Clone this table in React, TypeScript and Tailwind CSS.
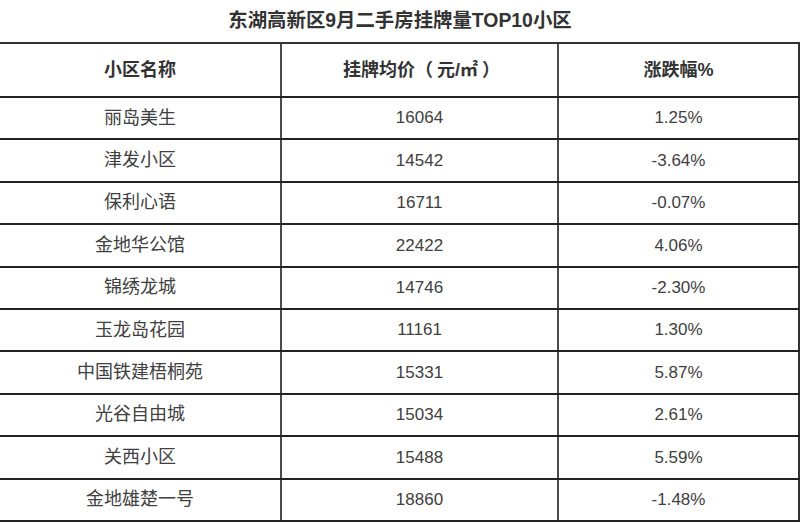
const ROWS = [
  { name: '丽岛美生', price: '16064', change: '1.25%' },
  { name: '津发小区', price: '14542', change: '-3.64%' },
  { name: '保利心语', price: '16711', change: '-0.07%' },
  { name: '金地华公馆', price: '22422', change: '4.06%' },
  { name: '锦绣龙城', price: '14746', change: '-2.30%' },
  { name: '玉龙岛花园', price: '11161', change: '1.30%' },
  { name: '中国铁建梧桐苑', price: '15331', change: '5.87%' },
  { name: '光谷自由城', price: '15034', change: '2.61%' },
  { name: '关西小区', price: '15488', change: '5.59%' },
  { name: '金地雄楚一号', price: '18860', change: '-1.48%' },
];

const FONT = "font-['Liberation_Sans','Noto_Sans_CJK_SC',sans-serif]";

export default function App() {
  return (
    <div className={`h-[523px] w-[800px] overflow-hidden bg-white ${FONT}`}>
      {/* Title */}
      <div className="flex h-[42px] items-center justify-center text-[19.4px] font-bold text-[#333]">
        东湖高新区9月二手房挂牌量TOP10小区
      </div>

      <div className="border-t-2 border-[#333]">
        {/* Header */}
        <div className="flex h-[54px] border-b-2 border-[#222] text-[18px] font-bold text-[#333]">
          <div className="flex w-[282px] items-center justify-center border-r-2 border-[#4a4a4a]">
            小区名称
          </div>
          <div className="flex w-[277px] items-center justify-center border-r-2 border-[#4a4a4a] pl-1">
            挂牌均价（<span className="ml-1">元/㎡</span>
            <span className="ml-1">）</span>
          </div>
          <div className="flex flex-1 items-center justify-center border-r-2 border-[#333]">
            涨跌幅%
          </div>
        </div>

        {ROWS.map((row) => (
          <div
            key={row.name}
            className="flex h-[42.4px] border-b-2 border-[#222] text-[17px] text-[#404040]"
          >
            <div className="flex w-[282px] items-center justify-center border-r-2 border-[#4a4a4a] text-[18px]">
              {row.name}
            </div>
            <div className="flex w-[277px] items-center justify-center border-r-2 border-[#4a4a4a]">
              {row.price}
            </div>
            <div className="flex flex-1 items-center justify-center border-r-2 border-[#333]">
              {row.change}
            </div>
          </div>
        ))}
      </div>
    </div>
  );
}
